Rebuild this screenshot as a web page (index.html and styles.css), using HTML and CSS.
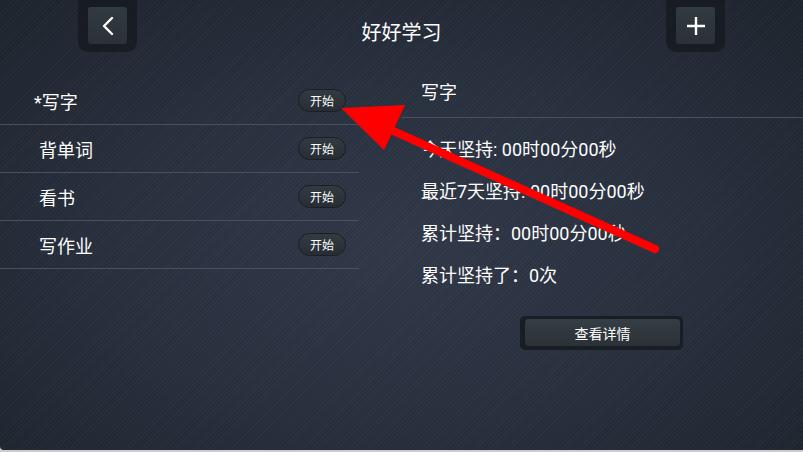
FILE: index.html
```html
<!DOCTYPE html>
<html lang="zh-CN">
<head>
    <meta charset="UTF-8">
    <meta name="viewport" content="width=device-width, initial-scale=1.0">
    <title>好好学习</title>
    <link rel="stylesheet" href="styles.css">
</head>
<body>
    <div class="app">
        <header class="topbar">
            <div class="nav-slot">
                <button class="nav-btn" aria-label="返回">
                    <svg width="14" height="20" viewBox="0 0 14 20">
                        <path d="M11 2 L3 10 L11 18" fill="none" stroke="#fff" stroke-width="2.4" stroke-linecap="round" stroke-linejoin="round"/>
                    </svg>
                </button>
            </div>
            <h1 class="title">好好学习</h1>
            <div class="nav-slot">
                <button class="nav-btn" aria-label="添加">
                    <svg width="20" height="20" viewBox="0 0 20 20">
                        <path d="M10 1 V19 M1 10 H19" fill="none" stroke="#fff" stroke-width="2.4"/>
                    </svg>
                </button>
            </div>
        </header>

        <main class="content">
            <ul class="task-list">
                <li class="task">
                    <span class="task-name task-name--active">*写字</span>
                    <button class="pill">开始</button>
                </li>
                <li class="task">
                    <span class="task-name">背单词</span>
                    <button class="pill">开始</button>
                </li>
                <li class="task">
                    <span class="task-name">看书</span>
                    <button class="pill">开始</button>
                </li>
                <li class="task">
                    <span class="task-name">写作业</span>
                    <button class="pill">开始</button>
                </li>
            </ul>

            <section class="detail">
                <h2 class="detail-title">写字</h2>
                <div class="stats">
                    <p>今天坚持: 00时00分00秒</p>
                    <p>最近7天坚持: 00时00分00秒</p>
                    <p>累计坚持：00时00分00秒</p>
                    <p>累计坚持了：0次</p>
                </div>
                <div class="more-wrap">
                    <button class="more-btn">查看详情</button>
                </div>
            </section>
        </main>

        <!-- Anmerkungspfeil -->
        <svg class="annotation" width="803" height="452" viewBox="0 0 803 452">
            <line x1="655" y1="249" x2="380" y2="125" stroke="#f00" stroke-width="8" stroke-linecap="round"/>
            <polygon points="341,108 405,105 384,150" fill="#f00"/>
        </svg>
    </div>
</body>
</html>
```

FILE: styles.css
```css
body {
    margin: 0;
    background: #c9ccd0;
    font-family: "Roboto", "Noto Sans CJK SC", sans-serif;
    color: #fff;
}

.app {
    position: relative;
    width: 803px;
    height: 450px;
    overflow: hidden;
    border-bottom-left-radius: 4px;
    background:
        repeating-linear-gradient(135deg, rgba(255, 255, 255, 0.025) 0 1px, transparent 1px 3px),
        radial-gradient(ellipse 70% 75% at 50% 55%, #303848 0%, #272e3c 55%, #1e242d 100%);
}

/* Kopfleiste */
.topbar {
    display: flex;
    align-items: flex-start;
    height: 52px;
    padding: 0 78px;
}

.nav-slot {
    width: 59px;
    height: 52px;
    box-sizing: border-box;
    padding: 7px 10px 0;
    background: rgba(18, 22, 28, 0.65);
    border-radius: 0 0 10px 10px;
}

.nav-btn {
    display: flex;
    align-items: center;
    justify-content: center;
    width: 39px;
    height: 37px;
    padding: 0;
    border: none;
    border-radius: 3px;
    background: linear-gradient(#323a41, #2a3238);
}

.title {
    flex: 1;
    margin: 0;
    padding-top: 20px;
    text-align: center;
    font-size: 20px;
    font-weight: normal;
    line-height: 26px;
}

/* Hauptbereich */
.content {
    display: flex;
    margin-top: 25px;
}

.task-list {
    width: 359px;
    margin: 0;
    padding: 0;
    list-style: none;
}

.task {
    display: flex;
    align-items: center;
    justify-content: space-between;
    height: 47px;
    padding: 0 13px 0 39px;
    border-bottom: 1px solid #4a515e;
}

.task-name {
    font-size: 18px;
}

.task-name--active {
    margin-left: -5px;
}

.pill {
    width: 48px;
    height: 23px;
    padding: 0;
    border: 1px solid #1a1f25;
    border-radius: 12px;
    background: linear-gradient(#333b42, #262d33);
    color: #fff;
    font-family: inherit;
    font-size: 12px;
}

.detail {
    flex: 1;
    margin-left: 43px;
}

.detail-title {
    margin: 0;
    height: 40px;
    padding-left: 19px;
    font-size: 18px;
    font-weight: normal;
    line-height: 32px;
    border-bottom: 1px solid #4a515e;
}

.stats {
    padding: 11px 0 0 19px;
}

.stats p {
    margin: 0;
    font-size: 18px;
    line-height: 42px;
}

.more-wrap {
    display: inline-block;
    margin: 19px 0 0 118px;
    padding: 3px 3px 4px 5px;
    background: #191e25;
    border-radius: 5px;
}

.more-btn {
    display: block;
    width: 155px;
    height: 27px;
    padding: 0;
    border: none;
    border-radius: 4px;
    background: linear-gradient(#363e45, #2a3137);
    color: #fff;
    font-family: inherit;
    font-size: 14px;
}

.annotation {
    position: absolute;
    top: 0;
    left: 0;
    pointer-events: none;
}
```
